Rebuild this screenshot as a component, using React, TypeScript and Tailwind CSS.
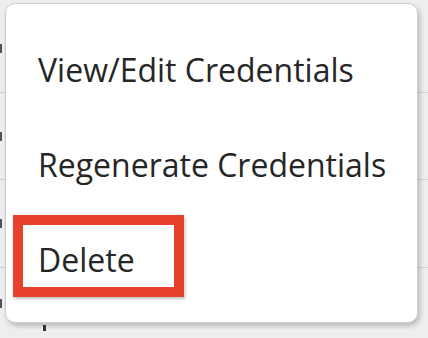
import React from "react";

export default function App() {
  const items = ["View/Edit Credentials", "Regenerate Credentials", "Delete"];
  return (
    <div className="relative w-[428px] h-[338px] overflow-hidden bg-[#eeeeee]" style={{ fontFamily: '"Open Sans", "Noto Sans", sans-serif' }}>
      {/* background table rows */}
      <div className="absolute inset-0 flex flex-col">
        <div className="h-[93px] border-b border-[#d2d2d2] flex items-center">
          <div className="w-[2px] h-[9px] bg-[#555] mb-[-4px]" />
        </div>
        <div className="h-[87px] border-b border-[#d2d2d2] flex items-center">
          <div className="w-[2px] h-[9px] bg-[#555]" />
        </div>
        <div className="h-[88px] border-b border-[#d2d2d2] flex items-center">
          <div className="w-[2px] h-[9px] bg-[#555]" />
        </div>
        <div className="flex-1 flex items-center">
          <div className="w-[2px] h-[9px] bg-[#555]" />
        </div>
      </div>
      <div className="absolute left-[43px] top-[325px] w-[3px] h-[6px] bg-[#333]" />

      {/* menu */}
      <div className="absolute left-[5px] top-[3px] w-[413px] h-[320px] bg-white rounded-[10px] border border-[#cfcfcf] shadow-[2px_3px_5px_rgba(0,0,0,0.22)] pt-[18px] flex flex-col">
        {items.map((t) => (
          <div key={t} className="h-[95px] flex items-center pl-[32px] text-[32px] leading-[44px] text-[#262626]">
            {t}
          </div>
        ))}
      </div>

      {/* highlight */}
      <div className="absolute left-[13px] top-[215px] w-[171px] h-[82px] border-[10px] border-[#e8402a] shadow-[1px_2px_3px_rgba(0,0,0,0.25)]" />
    </div>
  );
}
